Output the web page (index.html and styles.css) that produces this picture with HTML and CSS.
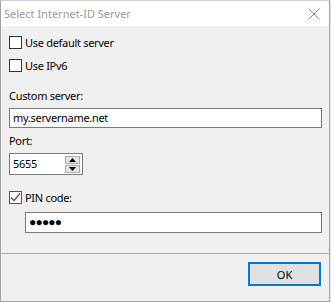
FILE: index.html
```html
<!DOCTYPE html>
<html lang="en">
<head>
  <meta charset="UTF-8" />
  <title>Select Internet-ID Server</title>
  <link rel="stylesheet" href="styles.css">
</head>
<body>

  <!-- Dialog window -->
  <div class="window">
    <div class="titlebar">
      <span class="title">Select Internet-ID Server</span>
      <svg class="close" width="12" height="12" viewBox="0 0 12 12">
        <path d="M0.5 0.5 L11.5 11.5 M11.5 0.5 L0.5 11.5" stroke="#8a8a8a" stroke-width="1" fill="none"/>
      </svg>
    </div>

    <div class="content">
      <label class="check-row first">
        <span class="checkbox"></span>
        <span>Use default server</span>
      </label>
      <label class="check-row second">
        <span class="checkbox"></span>
        <span>Use IPv6</span>
      </label>

      <div class="field-label server-label">Custom server:</div>
      <div class="textbox wide">my.servername.net</div>

      <div class="field-label port-label">Port:</div>
      <div class="textbox spinner">
        <span class="spin-value">5655</span>
        <span class="spin-buttons">
          <span class="spin-btn"><svg width="7" height="4" viewBox="0 0 7 4"><path d="M3.5 0 L7 4 L0 4 Z" fill="#000"/></svg></span>
          <span class="spin-btn"><svg width="7" height="4" viewBox="0 0 7 4"><path d="M0 0 L7 0 L3.5 4 Z" fill="#000"/></svg></span>
        </span>
      </div>

      <label class="check-row pin-row">
        <span class="checkbox checked">
          <svg width="11" height="11" viewBox="0 0 11 11"><path d="M1 5.5 L4 8.5 L10 1.5" stroke="#555" stroke-width="1.2" fill="none"/></svg>
        </span>
        <span>PIN code:</span>
      </label>
      <div class="textbox pin">&#9679;&#9679;&#9679;&#9679;&#9679;</div>
    </div>

    <div class="footer">
      <button class="ok-btn">OK</button>
    </div>
  </div>

</body>
</html>
```

FILE: styles.css
```css
body {
  margin: 0;
  background: #dfe6ee;
  font-family: "Noto Sans", Arial, sans-serif;
  font-size: 11px;
  letter-spacing: -0.3px;
  color: #000;
}
.window {
  width: 330px;
  height: 302px;
  box-sizing: border-box;
  border: 1px solid #a3a3a3;
  border-top-color: #d0d0d0;
  background: #f0f0f0;
  display: flex;
  flex-direction: column;
}
.titlebar {
  height: 25px;
  background: #fff;
  display: flex;
  align-items: center;
  justify-content: space-between;
  padding: 0 9px 0 3px;
}
.title {
  color: #9b9b9b;
  letter-spacing: 0;
  margin-top: -1px;
}
.close {
  margin-top: 1px;
}
.content {
  flex: 1;
  padding: 9px 7px 0 8px;
  display: flex;
  flex-direction: column;
}
.check-row {
  display: flex;
  align-items: center;
  gap: 3px;
  height: 15px;
}
.second {
  margin-top: 8px;
}
.pin-row {
  margin-top: 15px;
}
.checkbox {
  width: 13px;
  height: 13px;
  box-sizing: border-box;
  border: 1px solid #333;
  background: #fff;
  display: flex;
  align-items: center;
  justify-content: center;
}
.checkbox.checked {
  border-color: #555;
}
.field-label {
  height: 15px;
  line-height: 15px;
}
.server-label {
  margin-top: 15px;
}
.port-label {
  margin-top: 5px;
}
.textbox {
  box-sizing: border-box;
  height: 20px;
  border: 1px solid #7a7a7a;
  background: #fff;
  padding: 0 3px;
  line-height: 18px;
}
.wide {
  margin-top: 5px;
  width: 313px;
}
.spinner {
  margin-top: 5px;
  width: 74px;
  height: 22px;
  display: flex;
  align-items: center;
  justify-content: space-between;
  padding: 0 2px 0 3px;
}
.spin-buttons {
  display: flex;
  flex-direction: column;
  gap: 1px;
}
.spin-btn {
  width: 15px;
  height: 8px;
  box-sizing: border-box;
  border: 1px solid #adadad;
  background: #e5e5e5;
  display: flex;
  align-items: center;
  justify-content: center;
}
.pin {
  margin: 7px 0 0 16px;
  width: 297px;
  height: 21px;
  font-family: "Liberation Sans", Arial, sans-serif;
  font-size: 12px;
  letter-spacing: -0.8px;
  line-height: 19px;
}
.footer {
  height: 39px;
  border-top: 1px solid #a8a8a8;
  display: flex;
  justify-content: flex-end;
  align-items: flex-start;
  padding: 8px 8px 0 0;
}
.ok-btn {
  width: 73px;
  height: 24px;
  box-sizing: border-box;
  border: 2px solid #0078d7;
  background: #e1e1e1;
  font-family: "Noto Sans", Arial, sans-serif;
  font-size: 11px;
  padding: 0;
}
```
